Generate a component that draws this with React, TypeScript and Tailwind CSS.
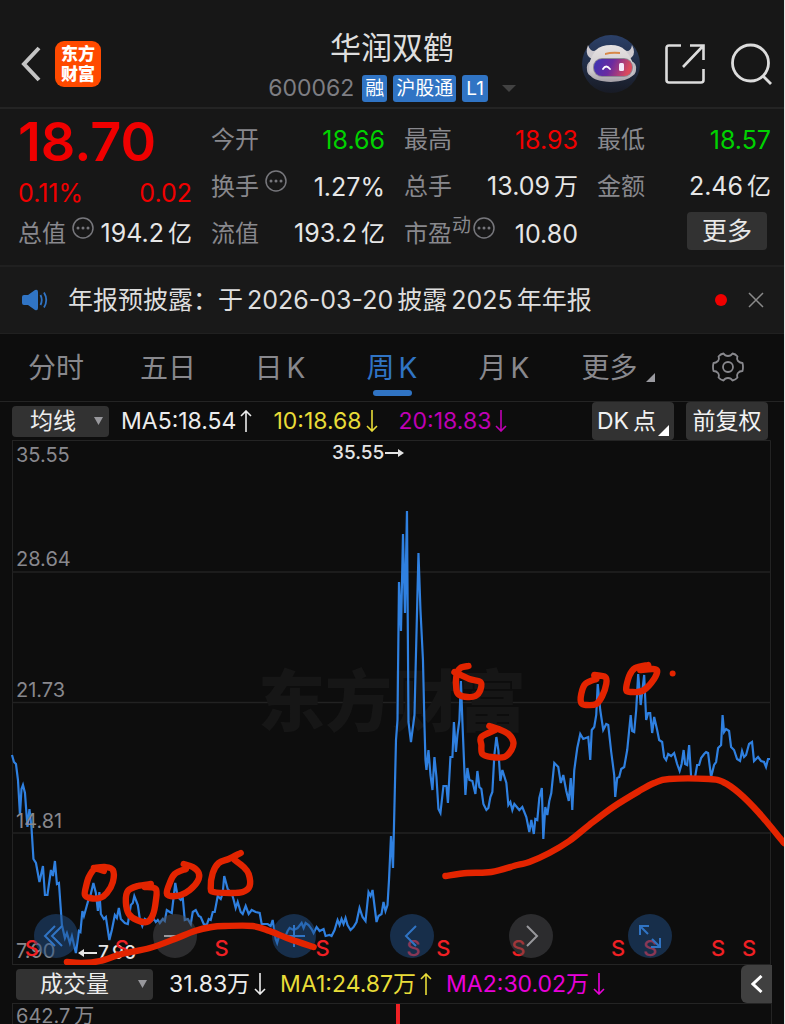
import { useState, type ReactNode } from "react";

type Tone = "up" | "down" | "flat";
type Point = [number, number];

const toneClass: Record<Tone, string> = {
  up: "text-[#f00000]",
  down: "text-[#00d200]",
  flat: "text-[#e6e6e6]",
};

const PRICE_LINE =
  "12,755 14,762 16,764 18,780 20,815 21.5,789 23,785 25,793 27.5,827 29.5,809 31.5,827 33.5,859 36,863 39.5,882 43,866 45,895 47.5,895 51,870 53,876 55,861 57,884 59,883 62,925 65,938 67,933 70,943 72,936 76,953 79,931 80.5,932 82.5,911 84,916 86,909 88.5,900 90,898 93.5,883 96,893 98,911 99.5,892 101,914 104,919 106,917 109.5,940 112,930 115,915 117,918 119,908 121,919 125,923 128,924 131,905 133,903 134.5,896 138,905 140,919 142.5,926 145,919 150,922 154,919 156,922 158,920 160,923 163,919 165,921 167,910 170,912 172,913 175.5,883 178,897 181,900 183,898 185,920 188,919 191,924 193,912 196,910 199,916 201,917 204,924 207,925 209,919 211,920 213,912 215,912 218,896 221,899 223,893 224.5,876 228,889 232,893 234,900 236,908 238,902 241,912 243,914 246,906 249,914 252,910 256,912 260,913 262,924 268,924 271,926 273,920 276,939 277.5,943 280,934 285,938 288,931 290,928 294,930 298,928 302,923 304,928 306,923 309,925 312,929 314,933 317,927 320,931 324,929 326,936 330,935 332,936 335,930 338,920 340,925 342,919 344,924 346,918 348,925 351,930 354,927 357,922 360,908 363,917 366,921 369,892 371,896 373,890 377,922 379,916 382,914 384,902 386,911 388,905 389.5,880 391.5,836 393.5,868 396.5,740 398,720 399.5,582 401.5,631 403.5,534 405.5,613 407.5,511 409,722 411.5,742 415,715 419,553 421,610 423.5,660 425,725 426,760 427,770 429,750 431,775 433,790 435,757 437,777 439,809 441,813 444,786 447,786 448.5,803 451,757 453,757 454.5,722 456.5,752 458,735 460,720 461.5,681 463,722 466,795 468,768 470,780 473,781 476,794 478,771 480,787 482,789 484,804 487,810 489,808 491,797 493,792 495,755 497,737 499,750 501,781 503,770 507,783 509,805 511,802 513,810 515,804 520,810 523,807 527,817 530,832 532,820 534.5,834 536,819 538,820 540,798 542.5,788 544,839 546,807 548,815 550,801 552,793 555,763 559,767 561.5,783 564,775 567,791 569.5,801 571.5,778 573,810 575,770 578,748 581,734 584,739 589,737 591,760 592.5,730 595,727 597,715 598.5,684 601,710 604,730 607,724 609,725 612,752 615,775 616,797 618,778 620,777 622,769 625,767 628,750 630,730 631.5,715 633,731 635,732 637,710 639,674 641.5,705 645,675 647,720 649,713 651,713 653,733 655,717 658,730 660,740 663,742 665,757 667,760 669,754 672,756 675,753 678,764 680.5,771 682.5,764 684.5,750 686,764 688,765 690,745 692,777 696,777 698,765 700,765 702,758 705,754 707,752 709,753 712,777 715,765 717,762 719,748 722,745 723.5,715 725,732 727,729 730,731 732,747 735,750 738,759 741,761 743,751 745,757 747,755 750,744 753,742 755,761 759,757 762,761 765,762 767,767 769,759 771,759";

const MARKS: Point[][] = [
  [[104, 871], [95, 869], [89, 877], [86, 887], [85, 895], [90, 898], [100, 898], [107, 893], [113, 882], [113, 870], [105, 867], [94, 868]],
  [[151, 884], [138, 886], [128, 891], [126, 902], [129, 914], [137, 920], [147, 922], [153, 915], [156, 901], [156, 889], [145, 887]],
  [[186, 869], [175, 874], [170, 883], [167, 893], [171, 896], [181, 895], [190, 890], [198, 881], [199, 873], [193, 867], [184, 864]],
  [[241, 853], [229, 859], [219, 863], [213, 873], [211, 888], [214, 892], [230, 893], [243, 892], [250, 886], [249, 874], [244, 867], [235, 860]],
  [[67, 962], [82, 963], [100, 961], [122, 954], [150, 948], [175, 939], [195, 931], [212, 927], [225, 926], [253, 926], [270, 931], [290, 939], [314, 947]],
  [[469, 666], [461, 668], [457, 675], [457, 690], [460, 695], [468, 697], [476, 696], [481, 690], [481, 682], [470, 679], [455, 672]],
  [[490, 726], [499, 729], [509, 734], [514, 742], [512, 750], [505, 757], [492, 757], [483, 754], [482, 745], [482, 737], [496, 730]],
  [[597, 679], [586, 684], [582, 694], [582, 703], [587, 705], [597, 704], [603, 696], [607, 684], [606, 677], [595, 675]],
  [[649, 665], [636, 668], [630, 676], [627, 690], [633, 692], [643, 691], [652, 683], [658, 672], [654, 669], [641, 670]],
  [[446, 876], [468, 873], [492, 872], [518, 865], [530, 862], [550, 853], [570, 841], [590, 825], [614, 807], [640, 791], [655, 783], [670, 779], [710, 779], [724, 782], [740, 793], [760, 813], [785, 843]],
];

function smoothPath(points: Point[]) {
  let d = `M${points[0][0]} ${points[0][1]}`;
  for (let i = 0; i < points.length - 1; i++) {
    const before = points[Math.max(i - 1, 0)];
    const from = points[i];
    const to = points[i + 1];
    const after = points[Math.min(i + 2, points.length - 1)];
    const c1 = [from[0] + (to[0] - before[0]) / 6, from[1] + (to[1] - before[1]) / 6];
    const c2 = [to[0] - (after[0] - from[0]) / 6, to[1] - (after[1] - from[1]) / 6];
    d += ` C${c1[0]} ${c1[1]} ${c2[0]} ${c2[1]} ${to[0]} ${to[1]}`;
  }
  return d;
}

const SIGNALS = [32, 122, 222, 323, 414, 444, 519, 619, 651, 719, 750];

function MoreDots() {
  return (
    <svg viewBox="0 0 22 22" className="mb-3 size-[22px] shrink-0" aria-hidden="true">
      <circle cx="11" cy="11" r="10" fill="none" stroke="#77777c" strokeWidth="1.5" />
      <g fill="#77777c">
        <circle cx="6" cy="11" r="1.5" />
        <circle cx="11" cy="11" r="1.5" />
        <circle cx="16" cy="11" r="1.5" />
      </g>
    </svg>
  );
}

interface MetricProps {
  label: string;
  value: string;
  unit?: string;
  tone?: Tone;
  extra?: ReactNode;
}

function Metric({ label, value, unit, tone = "flat", extra }: MetricProps) {
  return (
    <div className="flex items-center whitespace-nowrap">
      <dt className="flex items-center gap-[6px] text-[#88888d]">
        {label}
        {extra}
      </dt>
      <dd className={`ml-auto flex items-baseline gap-1 text-[25px] ${toneClass[tone]}`}>
        {value}
        {unit && <span className="text-[24px]">{unit}</span>}
      </dd>
    </div>
  );
}

function AppLogo() {
  return (
    <span className="grid size-[46px] place-content-center rounded-[9px] bg-[#ff4a00] text-center text-[17px] leading-[20px] font-black text-white">
      <span>东方</span>
      <span>财富</span>
    </span>
  );
}

function Robot() {
  return (
    <svg viewBox="0 0 58 58" className="size-[58px]" aria-hidden="true">
      <defs>
        <linearGradient id="disc" x1="0" y1="0" x2="0" y2="1">
          <stop offset="0" stopColor="#2b4068" />
          <stop offset="1" stopColor="#181b25" />
        </linearGradient>
        <linearGradient id="visor" x1="0" y1="0" x2="1" y2="0.2">
          <stop offset="0" stopColor="#3a35b4" />
          <stop offset="0.5" stopColor="#6a2ba0" />
          <stop offset="1" stopColor="#dc4a5c" />
        </linearGradient>
        <linearGradient id="shell" x1="0" y1="0" x2="0" y2="1">
          <stop offset="0" stopColor="#e6e2e2" />
          <stop offset="0.7" stopColor="#cfcbce" />
          <stop offset="1" stopColor="#a39ea6" />
        </linearGradient>
      </defs>
      <circle cx="29" cy="29" r="29" fill="url(#disc)" />
      <path d="M6 10 Q3 18 7 22 L11 25 L17 14 L12 16 Q8 16 6 10Z M50 10 Q54 18 50 22 L46 25 L40 14 L45 16 Q49 16 50 10Z" fill="#cfcbd0" />
      <path d="M9 26 Q4 28 5 35 Q5 40 11 42Z M49 26 Q55 28 54 35 Q54 40 48 42Z" fill="#bcb8be" />
      <path d="M8 26 Q10 20 14 15 Q19 10 29 10 Q38 10 43 15 Q48 20 50 26 Q53 35 50 41 Q46 46 29 47 Q12 46 9 41 Q6 35 8 26Z" fill="url(#shell)" />
      <path d="M23 18 Q30 16 38 17 L38 19 Q30 18 23 20Z" fill="#d88848" />
      <rect x="11" y="23" width="40" height="19" rx="9" fill="#8d8794" />
      <rect x="12" y="24" width="38" height="17" rx="8" fill="url(#visor)" />
      <path d="M21 34 Q24 29 28 34" fill="none" stroke="#fff" strokeWidth="1.8" strokeLinecap="round" />
      <rect x="37" y="28" width="5" height="8" rx="1.5" fill="#f4e9fa" />
    </svg>
  );
}

function Header() {
  return (
    <header className="grid h-[107px] grid-cols-[1fr_auto_1fr] items-center px-3 pt-5">
      <div className="ml-2 flex items-center gap-[14px]">
        <button type="button" aria-label="返回">
          <svg viewBox="0 0 21 36" className="h-9 w-[21px]" fill="none" stroke="#c4c4c4" strokeWidth="4">
            <path d="M19 2 L4 18 L19 34" />
          </svg>
        </button>
        <AppLogo />
      </div>
      <div className="flex flex-col items-center">
        <h1 className="text-[31px] leading-[44px] text-[#dedede]">华润双鹤</h1>
        <div className="mt-[5px] flex items-center gap-[6px] text-[19px] leading-[27px] text-white">
          <span className="mr-[2px] text-[23px] text-[#7e7e83]">600062</span>
          <span className="rounded-[3px] bg-[#3074c4] px-[3px]">融</span>
          <span className="rounded-[3px] bg-[#3074c4] px-[3px]">沪股通</span>
          <span className="rounded-[3px] bg-[#3074c4] px-1">L1</span>
          <button type="button" aria-label="展开" className="ml-2">
            <svg viewBox="0 0 14 7" className="h-[7px] w-[14px]" fill="#424242">
              <path d="M0 0H14L7 7Z" />
            </svg>
          </button>
        </div>
      </div>
      <div className="flex items-center justify-end gap-6">
        <button type="button" aria-label="智能助手">
          <Robot />
        </button>
        <button type="button" aria-label="分享">
          <svg viewBox="0 0 42 42" className="size-[42px]" fill="none" stroke="#dcdcdc" strokeWidth="2.6">
            <path d="M17 2.500H5Q2.500 2.500 2.500 5V37Q2.500 39.500 5 39.500H37Q39.500 39.500 39.500 37V26 M26 2.500H39.500V17 M39 3L19 24" />
          </svg>
        </button>
        <button type="button" aria-label="搜索">
          <svg viewBox="0 0 42 42" className="size-[42px]" fill="none" stroke="#dcdcdc" strokeWidth="2.8">
            <circle cx="20.500" cy="20" r="18" />
            <path d="M33 33L41 41" />
          </svg>
        </button>
      </div>
    </header>
  );
}

function Quote() {
  return (
    <section className="grid h-[158px] grid-cols-4 gap-x-[19px] border-t-2 border-[#242424] pt-[7px] pr-[13px] pl-[18px] text-[24px] leading-[30px]">
      <div className="grid grid-rows-[47px_47px_47px] items-center">
        <strong className="pt-1 text-[54px] leading-[54px] font-semibold text-[#f00000]">18.70</strong>
        <div className="flex justify-between pt-3 text-[25px] text-[#f00000]">
          <span>0.11%</span>
          <span>0.02</span>
        </div>
        <dl>
          <Metric label="总值" value="194.2" unit="亿" extra={<MoreDots />} />
        </dl>
      </div>
      <dl className="grid grid-rows-[47px_47px_47px] items-center">
        <Metric label="今开" value="18.66" tone="down" />
        <Metric label="换手" value="1.27%" extra={<MoreDots />} />
        <Metric label="流值" value="193.2" unit="亿" />
      </dl>
      <dl className="grid grid-rows-[47px_47px_47px] items-center">
        <Metric label="最高" value="18.93" tone="up" />
        <Metric label="总手" value="13.09" unit="万" />
        <Metric
          label="市盈"
          value="10.80"
          extra={
            <span className="-ml-[6px] flex items-center gap-[2px]">
              <sup className="top-0 mb-4 text-[19px] leading-5">动</sup>
              <MoreDots />
            </span>
          }
        />
      </dl>
      <div className="grid grid-rows-[94px_41px] items-center">
        <dl className="grid grid-rows-[47px_47px] items-center">
          <Metric label="最低" value="18.57" tone="down" />
          <Metric label="金额" value="2.46" unit="亿" />
        </dl>
        <button type="button" className="mr-1 ml-auto h-[38px] w-20 rounded-[4px] bg-[#323232] text-[25px] text-[#e8e8e8]">
          更多
        </button>
      </div>
    </section>
  );
}

function Notice() {
  return (
    <section className="flex h-[68px] items-center border-t-2 border-[#202020] bg-[#191919] pr-5 pl-[22px]">
      <svg viewBox="0 0 26 22" className="h-[22px] w-[26px]" aria-hidden="true">
        <path d="M2 6H6L13 1Q16 0 16 3V19Q16 22 13 21L6 16H2Q0 16 0 14V8Q0 6 2 6Z" fill="#3074c4" />
        <path d="M18.500 6Q21 11 18.500 16 M22 3.500Q26.500 11 22 18.500" fill="none" stroke="#3074c4" strokeWidth="1.800" />
      </svg>
      <p className="ml-5 text-[25px] leading-8 whitespace-nowrap text-[#dedede]">
        年报预披露：于<span className="mx-1">2026-03-20</span>披露<span className="mx-1">2025</span>年年报
      </p>
      <span className="ml-auto size-3 rounded-full bg-[#f00000]" />
      <button type="button" aria-label="关闭" className="ml-[21px]">
        <svg viewBox="0 0 16 16" className="size-4" stroke="#8a8a8a" strokeWidth="1.500">
          <path d="M1 1L15 15M15 1L1 15" />
        </svg>
      </button>
    </section>
  );
}

const TABS = ["分时", "五日", "日K", "周K", "月K", "更多"];

function Tabs() {
  const [active, setActive] = useState("周K");
  return (
    <nav className="grid h-[68px] grid-cols-7 border-t border-[#202020]">
      {TABS.map((tab) => (
        <button
          key={tab}
          type="button"
          onClick={() => setActive(tab)}
          className={`relative flex items-center justify-center text-[28px] ${tab === active ? "text-[#3074c4]" : "text-[#88888d]"}`}
        >
          {tab.endsWith("K") ? (
            <>
              {tab[0]}
              <span className="ml-1">K</span>
            </>
          ) : (
            tab
          )}
          {tab === "更多" && (
            <svg viewBox="0 0 9 9" className="mt-5 -mr-1 ml-2 size-[9px]" fill="#9a9aa0">
              <path d="M9 0V9H0Z" />
            </svg>
          )}
          {tab === active && <span className="absolute bottom-[5px] h-[6px] w-[39px] rounded-full bg-[#3074c4]" />}
        </button>
      ))}
      <button type="button" aria-label="设置" className="flex items-center justify-center pb-[2px]">
        <svg viewBox="0 0 32 30" className="h-[30px] w-8" fill="none" stroke="#88888d" strokeWidth="1.800" strokeLinejoin="round">
          <path d="M11.500 1.500Q13 4 16 4Q19 4 20.500 1.500Q23.500 2 25.500 4.500Q24.500 7 26 9Q28 11 30.500 11Q31.500 15 30.500 19Q27.500 19 26 21Q24.500 23 25.500 25.500Q23.500 28 20.500 28.500Q19 26 16 26Q13 26 11.500 28.500Q8.500 28 6.500 25.500Q7.500 23 6 21Q4.500 19 1.500 19Q0.500 15 1.500 11Q4 11 6 9Q7.500 7 6.500 4.500Q8.500 2 11.500 1.500Z" />
          <circle cx="16" cy="15" r="5" />
        </svg>
      </button>
    </nav>
  );
}

function Caret() {
  return (
    <svg viewBox="0 0 9 8" className="h-2 w-[9px]" fill="#98989c" aria-hidden="true">
      <path d="M0 0H9L4.500 8Z" />
    </svg>
  );
}

function Arrow({ up = false }: { up?: boolean }) {
  return (
    <svg viewBox="0 0 12 22" className="h-[22px] w-3 shrink-0" fill="none" stroke="currentColor" strokeWidth="1.600">
      <path d={up ? "M6 22V1M1 6L6 1L11 6" : "M6 0V21M1 16L6 21L11 16"} />
    </svg>
  );
}

function Average({ text, up, className }: { text: string; up?: boolean; className: string }) {
  return (
    <span className={`flex items-center gap-1 whitespace-nowrap ${className}`}>
      {text}
      <Arrow up={up} />
    </span>
  );
}

function AverageBar() {
  return (
    <div className="flex h-[39px] items-center border-t border-[#242424] pr-4 pl-3 text-[23px]">
      <button type="button" className="flex h-[31px] w-[97px] items-center justify-between rounded-[4px] bg-[#323232] pr-[6px] pl-[18px] leading-[31px] text-[#ececec]">
        均线
        <Caret />
      </button>
      <div className="ml-3 flex gap-[21px]">
        <Average text="MA5:18.54" up className="text-[#ececec]" />
        <Average text="10:18.68" className="text-[#e8dc38]" />
        <Average text="20:18.83" className="text-[#c000b4]" />
      </div>
      <button type="button" className="relative ml-auto h-[38px] w-[82px] rounded-[4px] bg-[#323232] pl-[5px] text-left text-[#f2f2f2]">
        DK<span className="ml-1">点</span>
        <svg viewBox="0 0 11 11" className="absolute right-[5px] bottom-1 size-[11px]" fill="#fff">
          <path d="M11 0V11H0Z" />
        </svg>
      </button>
      <button type="button" className="ml-3 h-[38px] w-[82px] rounded-[4px] bg-[#323232] text-[#f2f2f2]">
        前复权
      </button>
    </div>
  );
}

const CONTROLS = [
  { name: "快退", blue: true, path: "M21 12L11 22L21 32M28 12L18 22L28 32" },
  { name: "缩小", blue: false, path: "M11 22H33" },
  { name: "放大", blue: true, path: "M11 22H33M22 11V33" },
  { name: "左移", blue: true, path: "M26 12L16 22L26 32" },
  { name: "右移", blue: false, path: "M18 12L28 22L18 32" },
  { name: "全屏", blue: true, path: "M12 21V12H21M12 12L20 20M32 24V33H23M32 33L24 25" },
];

function PriceChart() {
  return (
    <section className="relative h-[525px] overflow-hidden text-[20px] leading-6 text-[#88888d]" aria-label="周K线图">
      <svg viewBox="0 440 785 525" preserveAspectRatio="none" className="absolute inset-0 size-full">
        <path d="M12 440.500H771.500V965M12.500 440V965M12 964.500H772" stroke="#242424" fill="none" />
        <path d="M12 572H771M12 702.500H771M12 833H771" stroke="#222222" strokeWidth="1.500" />
      </svg>
      <span className="absolute top-[217px] right-1/3 left-1/3 flex justify-center text-[67px] leading-[90px] font-black whitespace-nowrap text-[#161616]">
        东方财富
      </span>
      <svg viewBox="0 440 785 525" preserveAspectRatio="none" className="absolute inset-0 size-full">
        <polyline points={PRICE_LINE} fill="none" stroke="#2f80e0" strokeWidth="2.200" />
      </svg>
      <span className="absolute top-[3px] left-4">35.55</span>
      <span className="absolute top-[107px] left-4">28.64</span>
      <span className="absolute top-[238px] left-4">21.73</span>
      <span className="absolute top-[369px] left-4">14.81</span>
      <span className="absolute top-[499px] left-4">7.90</span>
      <span className="absolute top-px left-[332px] flex items-center text-[19px] font-medium text-[#e4e4e4]">
        35.55
        <svg viewBox="0 0 20 8" className="h-2 w-5" fill="#e4e4e4">
          <path d="M1 3H14V0L20 4L14 8V5H1Z" />
        </svg>
      </span>
      <span className="absolute top-[501px] left-[78px] flex items-center text-[19px] font-medium text-[#e4e4e4]">
        <svg viewBox="0 0 20 8" className="h-2 w-5" fill="#e4e4e4">
          <path d="M19 3H6V0L0 4L6 8V5H19Z" />
        </svg>
        7.90
      </span>
      {SIGNALS.map((x) => (
        <span
          key={x}
          className="absolute top-[496px] -translate-x-1/2 text-[22px] font-medium text-[#f02024]"
          style={{ left: `${(x / 785) * 100}%` }}
        >
          S
        </span>
      ))}
      <div className="absolute right-[14.3%] bottom-[7px] left-[34px] flex justify-between">
        {CONTROLS.map((c) => (
          <button
            key={c.name}
            type="button"
            aria-label={c.name}
            className={`size-[44px] rounded-full ${c.blue ? "bg-[#215088]/50 text-[#3074c4]" : "bg-[#4c4c50]/50 text-[#98989c]"}`}
          >
            <svg viewBox="0 0 44 44" className="size-full" fill="none" stroke="currentColor" strokeWidth="2">
              <path d={c.path} />
            </svg>
          </button>
        ))}
      </div>
      <svg viewBox="0 440 785 525" preserveAspectRatio="none" className="pointer-events-none absolute inset-0 size-full">
        <g fill="none" stroke="#e32400" strokeWidth="6.400" strokeLinecap="round" strokeLinejoin="round">
          {MARKS.map((points, i) => (
            <path key={i} d={smoothPath(points)} />
          ))}
        </g>
        <circle cx="673.500" cy="673.500" r="3" fill="#e32400" />
      </svg>
    </section>
  );
}

function VolumePanel() {
  return (
    <section className="flex flex-1 flex-col" aria-label="成交量">
      <div className="flex h-[38px] items-center pr-3 pl-4 text-[23px]">
        <button type="button" className="flex h-[31px] w-[137px] items-center justify-between rounded-[4px] bg-[#323232] pr-[6px] pl-6 leading-[31px] text-[#ececec]">
          成交量
          <Caret />
        </button>
        <div className="ml-4 flex gap-[14px]">
          <Average text="31.83万" className="text-[#ececec]" />
          <Average text="MA1:24.87万" up className="text-[#e8dc38]" />
          <Average text="MA2:30.02万" className="text-[#e800d8]" />
        </div>
        <button type="button" aria-label="收起" className="ml-auto grid h-[38px] w-[31px] place-content-center rounded-l-[6px] bg-[#404040]">
          <svg viewBox="0 0 12 18" className="h-[18px] w-3" fill="none" stroke="#fff" strokeWidth="3">
            <path d="M10.500 1L2 9L10.500 17" />
          </svg>
        </button>
      </div>
      <div className="relative mx-3 min-h-[21px] flex-1 overflow-hidden border-x border-t border-[#242424]">
        <span className="absolute top-0 left-[3px] text-[20px] leading-6 text-[#88888d]">
          642.7<span className="ml-1">万</span>
        </span>
        <svg viewBox="0 0 760 21" preserveAspectRatio="none" className="absolute inset-0 size-full" aria-hidden="true">
          <rect x="384" width="4" height="21" fill="#f02024" />
        </svg>
      </div>
    </section>
  );
}

export default function App() {
  return (
    <div className="flex min-h-screen flex-col border-r border-[#e8e8e8] bg-[#0d0d0d] font-['Inter','Noto_Sans_CJK_SC',sans-serif]">
      <div className="bg-[#171717]">
        <Header />
        <Quote />
        <Notice />
      </div>
      <Tabs />
      <AverageBar />
      <PriceChart />
      <VolumePanel />
    </div>
  );
}
